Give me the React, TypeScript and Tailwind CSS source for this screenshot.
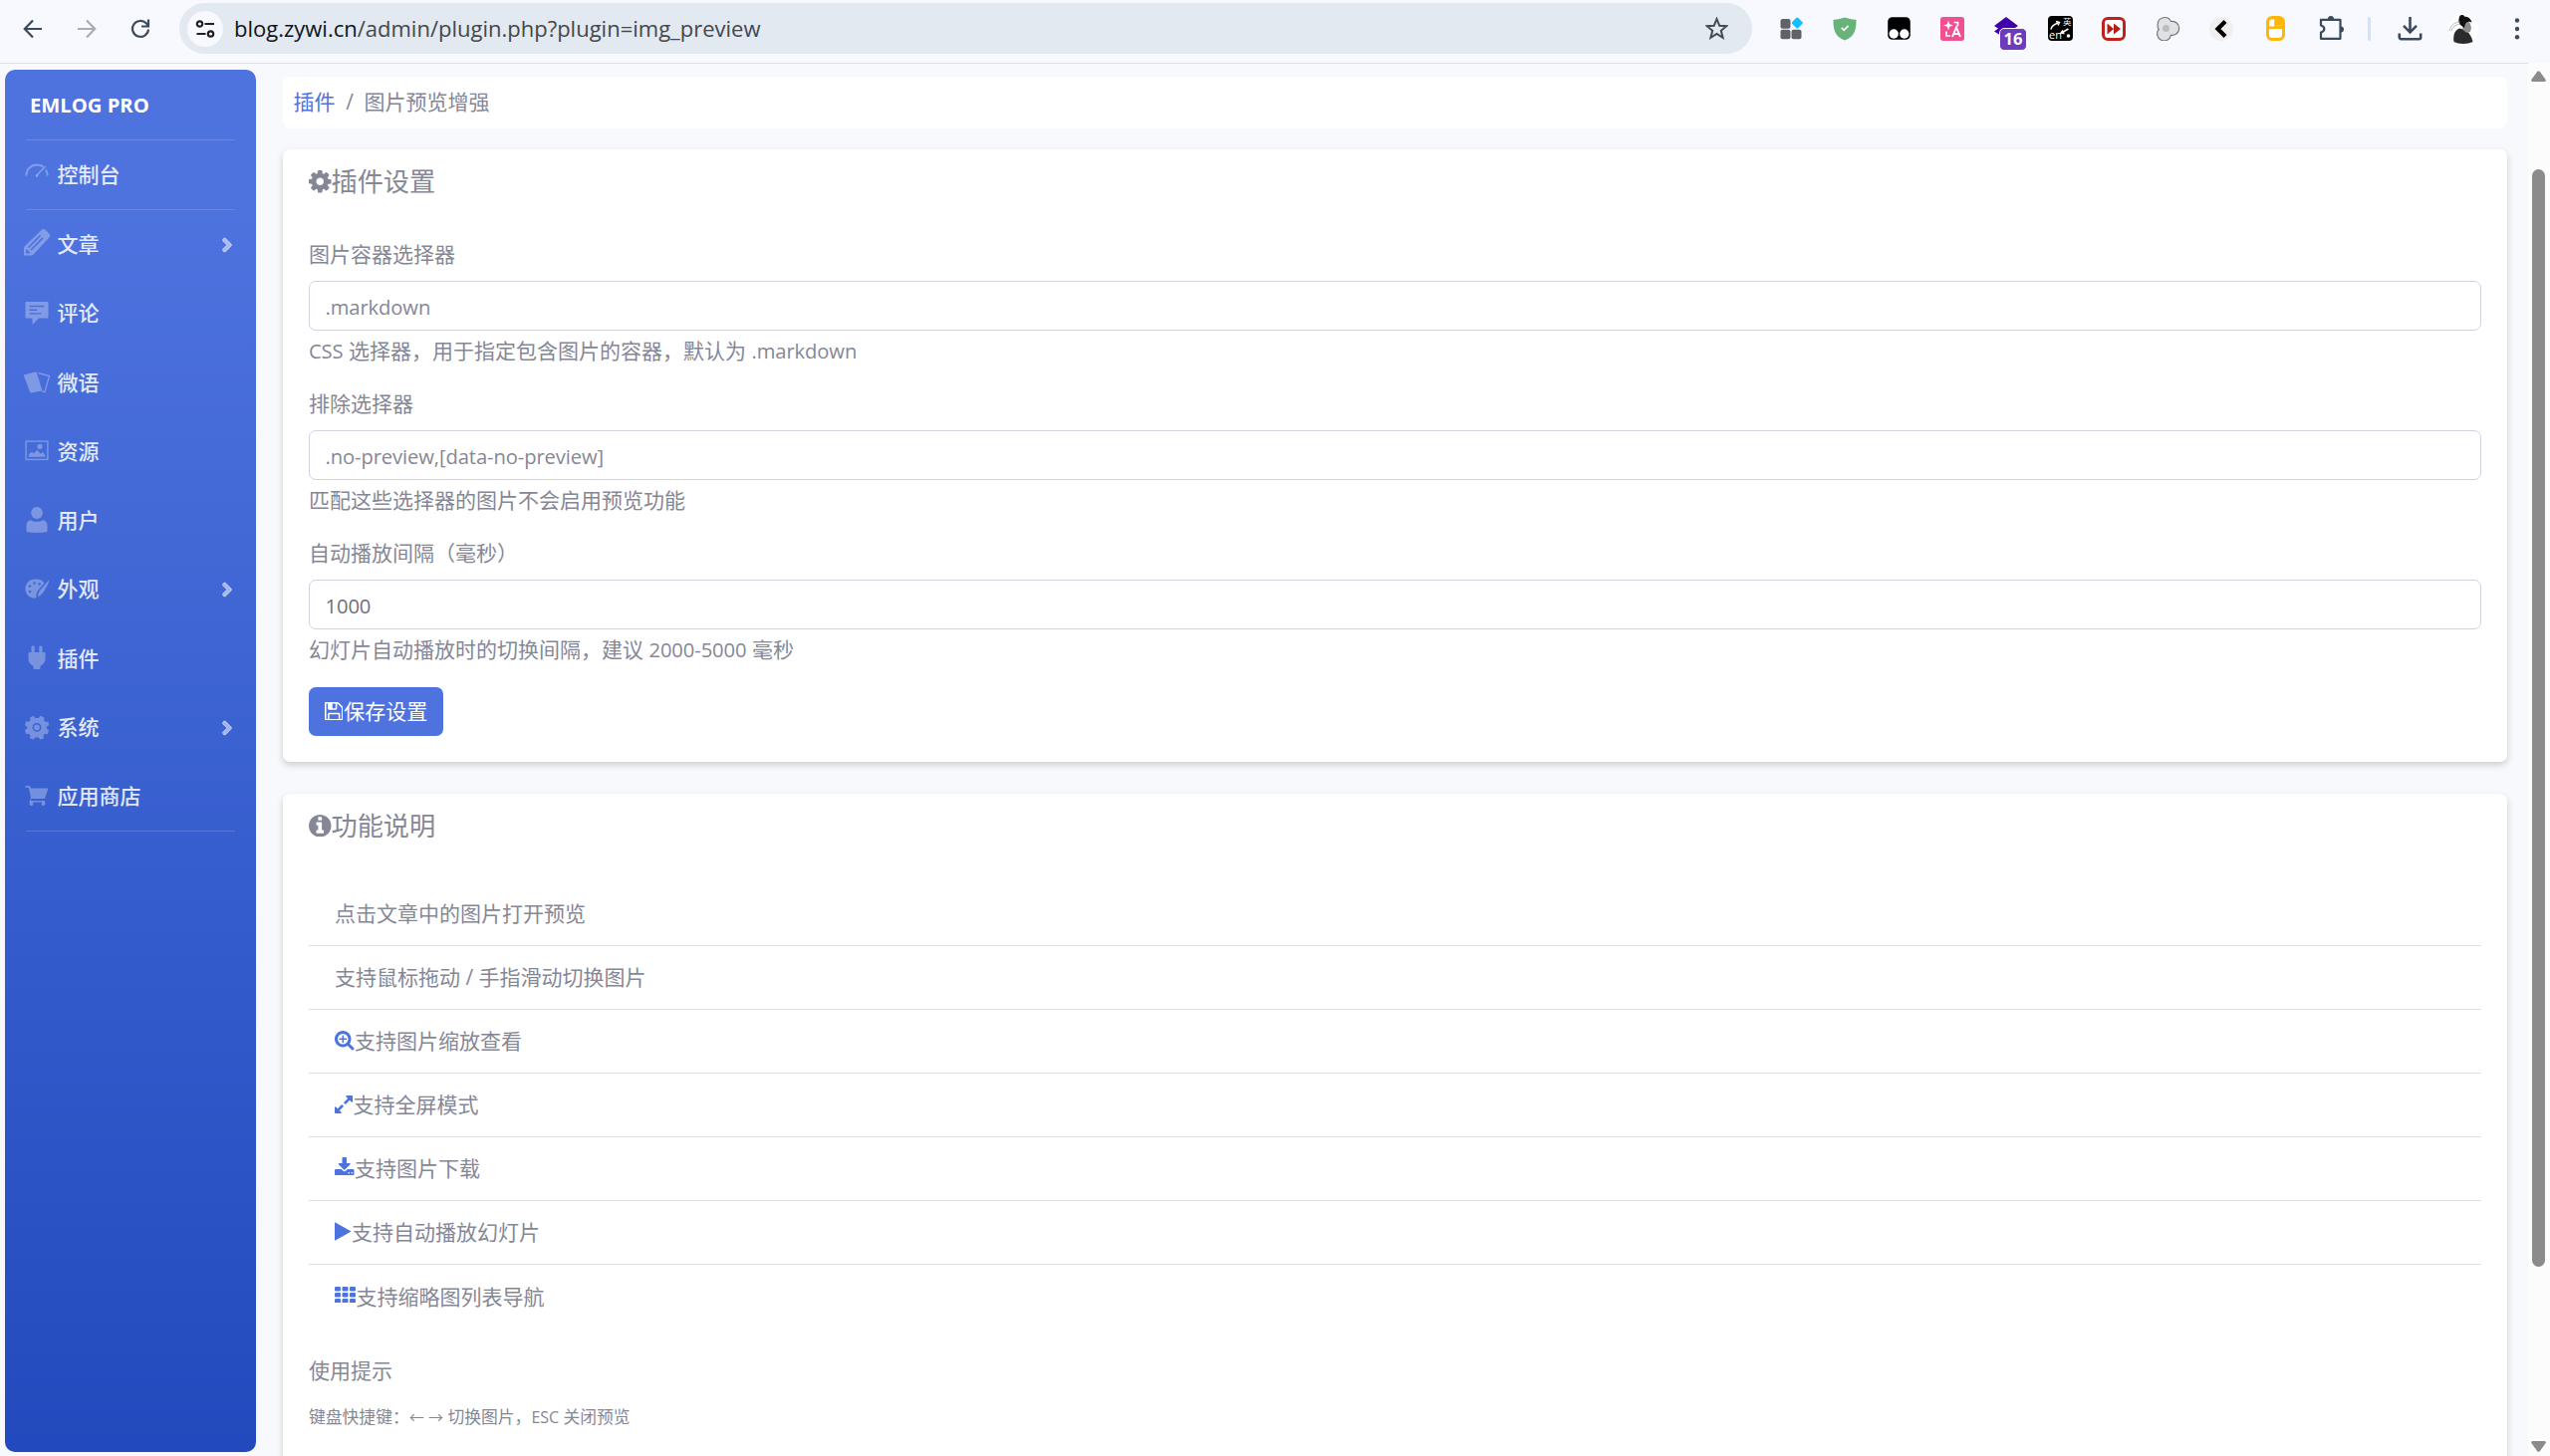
import type { ReactNode } from 'react';
import { FaAngleRight } from 'react-icons/fa';

const COG =
  'M1024 896q0-106-75-181t-181-75-181 75-75 181 75 181 181 75 181-75 75-181zm512-109v222q0 12-8 23t-20 13l-185 28q-19 54-39 91 35 50 107 138 10 12 10 25t-9 23q-27 37-99 108t-94 71q-12 0-26-9l-138-108q-44 23-91 38-16 136-29 186-7 28-36 28h-222q-14 0-24.5-8.5t-11.5-21.5l-28-184q-49-16-90-37l-141 107q-10 9-25 9-14 0-25-11-126-114-165-168-7-10-7-23 0-12 8-23 15-21 51-66.5t54-70.5q-27-50-41-99l-183-27q-13-2-21-12.5t-8-23.5v-222q0-12 8-23t19-13l186-28q14-46 39-92-40-57-107-138-10-12-10-24 0-10 9-23 26-36 98.5-107.5t94.5-71.5q13 0 26 10l138 107q44-23 91-38 16-136 29-186 7-28 36-28h222q14 0 24.5 8.5t11.5 21.5l28 184q49 16 90 37l142-107q9-9 24-9 13 0 25 10 129 119 165 170 7 8 7 22 0 12-8 23-15 21-51 66.5t-54 70.5q26 50 41 98l183 28q13 2 21 12.5t8 23.5z';
const INFO =
  'M1152 1376v-160q0-14-9-23t-23-9h-96v-512q0-14-9-23t-23-9h-320q-14 0-23 9t-9 23v160q0 14 9 23t23 9h96v320h-96q-14 0-23 9t-9 23v160q0 14 9 23t23 9h448q14 0 23-9t9-23zm-128-896v-160q0-14-9-23t-23-9h-192q-14 0-23 9t-9 23v160q0 14 9 23t23 9h192q14 0 23-9t9-23zm640 416q0 209-103 385.5t-279.5 279.5-385.5 103-385.5-103-279.5-279.5-103-385.5 103-385.5 279.5-279.5 385.5-103 385.5 103 279.5 279.5 103 385.5z';
const SEARCH_PLUS =
  'M1088 800v64q0 13-9.5 22.5t-22.5 9.5h-224v224q0 13-9.5 22.5t-22.5 9.5h-64q-13 0-22.5-9.5t-9.5-22.5v-224h-224q-13 0-22.5-9.5t-9.5-22.5v-64q0-13 9.5-22.5t22.5-9.5h224v-224q0-13 9.5-22.5t22.5-9.5h64q13 0 22.5 9.5t9.5 22.5v224h224q13 0 22.5 9.5t9.5 22.5zm128 32q0-185-131.5-316.5t-316.5-131.5-316.5 131.5-131.5 316.5 131.5 316.5 316.5 131.5 316.5-131.5 131.5-316.5zm512 832q0 53-37.5 90.5t-90.5 37.5q-54 0-90-38l-343-342q-179 124-399 124-143 0-273.5-55.5t-225-150-150-225-55.5-273.5 55.5-273.5 150-225 225-150 273.5-55.5 273.5 55.5 225 150 150 225 55.5 273.5q0 220-124 399l343 343q37 37 37 90z';
const EXPAND =
  'M883 1056q0 13-10 23l-332 332 144 144q19 19 19 45t-19 45-45 19h-448q-26 0-45-19t-19-45v-448q0-26 19-45t45-19 45 19l144 144 332-332q10-10 23-10t23 10l114 114q10 10 10 23zm781-864v448q0 26-19 45t-45 19-45-19l-144-144-332 332q-10 10-23 10t-23-10l-114-114q-10-10-10-23t10-23l332-332-144-144q-19-19-19-45t19-45 45-19h448q26 0 45 19t19 45z';
const DOWNLOAD =
  'M1344 1344q0-26-19-45t-45-19-45 19-19 45 19 45 45 19 45-19 19-45zm256 0q0-26-19-45t-45-19-45 19-19 45 19 45 45 19 45-19 19-45zm128-224v320q0 40-28 68t-68 28h-1472q-40 0-68-28t-28-68v-320q0-40 28-68t68-28h465l135 136q58 56 136 56t136-56l136-136h464q40 0 68 28t28 68zm-325-569q17 41-14 70l-448 448q-18 19-45 19t-45-19l-448-448q-31-29-14-70 17-39 59-39h256v-448q0-26 19-45t45-19h256q26 0 45 19t19 45v448h256q42 0 59 39z';
const PLAY =
  'M1576 927l-1328 738q-23 13-39.5 3t-16.5-36v-1472q0-26 16.5-36t39.5 3l1328 738q23 13 23 31t-23 31z';
const FLOPPY =
  'M512 1536h768v-384h-768v384zm896 0h128v-896q0-14-10-38.5t-20-34.5l-281-281q-10-10-34-20t-39-10v416q0 40-28 68t-68 28h-576q-40 0-68-28t-28-68v-416h-128v1280h128v-416q0-40 28-68t68-28h832q40 0 68 28t28 68v416zm-384-928v-320q0-13-9.5-22.5t-22.5-9.5h-192q-13 0-22.5 9.5t-9.5 22.5v320q0 13 9.5 22.5t22.5 9.5h192q13 0 22.5-9.5t9.5-22.5zm640 32v928q0 40-28 68t-68 28h-1344q-40 0-68-28t-28-68v-1344q0-40 28-68t68-28h928q40 0 88 20t76 48l280 280q28 28 48 76t20 88z';

function Glyph({ d, box, className }: { d: string; box: string; className: string }) {
  return (
    <svg viewBox={box} className={`shrink-0 ${className}`} fill="currentColor">
      <path d={d} />
    </svg>
  );
}

/* Latin runs are set a little smaller than the Chinese text around them. */
function En({ children }: { children: ReactNode }) {
  return <span className="text-[20.2px] tracking-[-0.1px]">{children}</span>;
}

function ToolSlot({ children }: { children: ReactNode }) {
  return <div className="flex w-[54px] shrink-0 items-center justify-center">{children}</div>;
}

function BrowserBar() {
  return (
    <header className="flex h-[64px] shrink-0 items-start border-b border-[#dcdfe6] bg-[#f8f9fe]">
      <div className="flex h-[57px] w-full items-center">
        <div className="flex w-[180px] items-center pl-[6px] text-[#3c4a5c]">
          <ToolSlot>
            <svg className="h-[20px] w-[20px]" viewBox="0 0 20 20" fill="none" stroke="currentColor" strokeWidth="2.2">
              <path d="M19 10H2M10 1.5L1.8 10l8.200 8.500" />
            </svg>
          </ToolSlot>
          <ToolSlot>
            <svg className="h-[20px] w-[20px] text-[#a9acb2]" viewBox="0 0 20 20" fill="none" stroke="currentColor" strokeWidth="2.2">
              <path d="M1 10h17M10 1.500l8.200 8.500-8.200 8.500" />
            </svg>
          </ToolSlot>
          <ToolSlot>
            <svg className="h-[20px] w-[20px]" viewBox="0 0 20 20" fill="none" stroke="currentColor" strokeWidth="2.200">
              <path d="M18 10.500A8 8 0 1 1 15.700 4.300L18 6.600M18 0.500v7h-7" />
            </svg>
          </ToolSlot>
        </div>
        <div className="flex h-[51px] w-[1579px] items-center rounded-full bg-[#e2e9f1] pl-[8px] pr-[24px]">
          <div className="flex h-[36px] w-[36px] items-center justify-center rounded-full bg-[#f8f9fe]">
            <svg className="h-[18px] w-[20px]" viewBox="0 0 20 18" fill="none" stroke="#202124" strokeWidth="2.200">
              <circle cx="4.500" cy="4" r="2.700" />
              <path d="M9.500 4H19M1.500 14h9" />
              <circle cx="15.500" cy="14" r="2.700" />
            </svg>
          </div>
          <p className="-mt-[2px] ml-[11px] flex-1 text-[22px] leading-[30px] text-[#44474c]">
            <span className="text-[#111317]">blog.zywi.cn</span>/admin/plugin.php?plugin=img_preview
          </p>
          <svg className="h-[23px] w-[23px]" viewBox="0 0 23 23" fill="none" stroke="#444a52" strokeWidth="2">
            <path d="M11.500 2l2.700 6.700 7.100.500-5.500 4.600 1.800 7-6.100-3.900-6.100 3.900 1.800-7L1.700 9.200l7.100-.500z" />
          </svg>
        </div>
        <div className="ml-[12px] flex items-center">
          <ToolSlot>
            <svg className="h-[23px] w-[23px]" viewBox="0 0 23 23">
              <rect x="0.500" y="2" width="10" height="9.700" rx="2" fill="#5f6368" />
              <rect x="0.500" y="12.800" width="10" height="9.500" rx="2" fill="#5f6368" />
              <rect x="11.500" y="12.800" width="10" height="9.500" rx="2" fill="#5f6368" />
              <rect x="13" y="1.700" width="8.600" height="8.600" rx="1.500" fill="#12bfff" transform="rotate(45 17.300 6)" />
            </svg>
          </ToolSlot>
          <ToolSlot>
            <svg className="h-[24px] w-[24px]" viewBox="0 0 24 24">
              <path d="M12 0.500c3.500 1.300 7 2 11.500 2.200C23.700 13 21.500 20 12 23.500 2.500 20 .3 13 .5 2.700 5 2.500 8.500 1.800 12 .5z" fill="#68b377" />
              <path d="M8.800 10.800l2.500 2.500 4.200-4.400" fill="none" stroke="#fff" strokeWidth="1.800" />
            </svg>
          </ToolSlot>
          <ToolSlot>
            <svg className="h-[23px] w-[23px]" viewBox="0 0 23 23">
              <rect x="0.200" y="0.200" width="22.600" height="22.600" rx="4.500" fill="#000" />
              <circle cx="6.200" cy="17" r="4.700" fill="#fff" />
              <circle cx="16.800" cy="17" r="4.700" fill="#fff" />
            </svg>
          </ToolSlot>
          <ToolSlot>
            <svg className="h-[24px] w-[24px]" viewBox="0 0 24 24" fill="none" stroke="#fff">
              <rect width="24" height="24" rx="3" fill="#f14f92" stroke="none" />
              <path d="M8 3.500l1.200 3.800L13 8.500l-3.800 1.200L8 13.500 6.800 9.700 3 8.500l3.800-1.200z" fill="#fff" stroke="none" />
              <path d="M13.500 5.500h4v4M6 14.500v4.500h4" strokeWidth="1.700" />
              <path d="M12 20l4-9.500 4 9.500M13.300 17h5.400" strokeWidth="1.900" />
            </svg>
          </ToolSlot>
          <ToolSlot>
            <div className="relative h-[24px] w-[24px]">
              <svg className="h-[24px] w-[24px]" viewBox="0 0 24 24">
                <path d="M12 0l12 9-12 8L0 9z" fill="#4200ad" />
                <path d="M0 14.500l5-3.500 7 5v6z" fill="#4200ad" />
              </svg>
              <span className="absolute left-[5px] top-[11px] flex h-[23px] w-[28px] items-center justify-center rounded-[5px] border border-[#f8f9fe] bg-[#6c3cbd] text-[16.5px] font-bold leading-none text-white">
                16
              </span>
            </div>
          </ToolSlot>
          <ToolSlot>
            <div className="relative h-[25px] w-[25px] rounded-[4px] bg-black text-white">
              <svg className="h-[25px] w-[25px]" viewBox="0 0 25 25" fill="none" stroke="#fff" strokeWidth="1.500">
                <path d="M3 13.500c.500-3.500 3-5 7-6.500M8 5.500l3.500 1-1.500 3M13.500 17l7-4M15 14.500l-2 2.700 3.500.300" />
                <circle cx="20.500" cy="20" r="1.800" fill="#fff" stroke="none" />
              </svg>
              <span className="absolute bottom-[1px] left-[1.500px] text-[11px] leading-[10px]">en</span>
              <span className="absolute right-[1px] top-[1px] text-[8.500px] leading-[9px]">英</span>
            </div>
          </ToolSlot>
          <ToolSlot>
            <svg className="h-[24px] w-[24px]" viewBox="0 0 24 24">
              <rect x="1.500" y="1.500" width="21" height="21" rx="4.500" fill="#fff" stroke="#bf221d" strokeWidth="3" />
              <path d="M5.500 6.500l6.500 5.500-6.500 5.500zM12 6.500l7 5.500-7 5.500z" fill="#b41c18" />
            </svg>
          </ToolSlot>
          <ToolSlot>
            <svg className="h-[25px] w-[25px]" viewBox="0 0 25 25">
              <path
                d="M2.200 8.500A7 7 0 0 1 15.500 5.500 7 7 0 1 1 15.500 19.300 7 7 0 1 1 3.200 13.500 7 7 0 0 1 2.200 8.500z"
                fill="#e0e1e3"
                stroke="#75777b"
                strokeWidth="1.200"
              />
              <circle cx="10.500" cy="12.500" r="3.500" fill="#bcbdbf" />
            </svg>
          </ToolSlot>
          <ToolSlot>
            <svg className="h-[24px] w-[24px]" viewBox="0 0 24 24">
              <circle cx="12" cy="12" r="12" fill="#f0efee" />
              <path d="M16 4.500L8.500 12l7.500 7.500" fill="none" stroke="#000" strokeWidth="4.200" />
            </svg>
          </ToolSlot>
          <ToolSlot>
            <svg className="h-[25px] w-[19px]" viewBox="0 0 19 25">
              <rect x="1.500" y="1.500" width="16" height="22" rx="4.500" fill="#fff" stroke="#ffb60a" strokeWidth="3" />
              <path d="M2 13V3h8v6.500h7V13z" fill="#ffb60a" />
              <path d="M10 2.500h4.500a2.500 2.500 0 0 1 2 2.500v4.500H10z" fill="#ffb60a" />
              <path d="M3.300 10.500V6a2.700 2.700 0 0 1 2.700-2.700h2.200v7.200z" fill="#fff" />
            </svg>
          </ToolSlot>
          <div className="flex w-[58px] items-center justify-center">
            <svg className="h-[25px] w-[25px]" viewBox="0 0 25 25" fill="none" stroke="#3c4a5c" strokeWidth="2.200" strokeLinejoin="round">
              <path d="M2 3.800h19.500v19H2v-6.300c4.500-1.500 4.500-5.500 0-7z" />
              <path d="M9 3a3 3 0 0 1 6 0zM22 10.500a3 3 0 0 1 0 6z" fill="#3c4a5c" stroke="none" />
            </svg>
          </div>
          <div className="ml-[8px] h-[24px] w-[3px] rounded-full bg-[#cfe3fc]" />
          <div className="ml-[12px] flex">
            <ToolSlot>
              <svg className="h-[25px] w-[25px]" viewBox="0 0 25 25" fill="none" stroke="#3c4a5c" strokeWidth="2.600">
                <path d="M12.500 1v15M6 9.800l6.500 6.500L19 9.800M1.800 17.500v4a1.700 1.700 0 0 0 1.700 1.700h18a1.700 1.700 0 0 0 1.700-1.700v-4" />
              </svg>
            </ToolSlot>
            <ToolSlot>
              <svg className="h-[30px] w-[30px]" viewBox="0 0 30 30">
                <circle cx="15" cy="15" r="15" fill="#fff" />
                <path d="M5.500 28c-1-6 .5-12 6-13.500l5 1.500c4 2 7 7 8 12-5 2.500-14 2.700-19 0z" fill="#2b2b2b" />
                <path d="M14 8c3-1.500 7-.5 8 2l1 4-1 4-4 .8-3.500-3z" fill="#8c8c8c" />
                <path d="M11 3c1-2.500 4-2.500 5-.5 4 .3 7 2.500 7.500 6-3-1.500-5-.5-6.500 1.500l-1 4-4-3c-2-2-2-5-1-8z" fill="#111" />
                <path d="M12 8C6 8 2 12 1 17M12 10c-5 1-8 3-9 7" stroke="#999" strokeWidth="0.700" fill="none" />
              </svg>
            </ToolSlot>
            <ToolSlot>
              <svg className="h-[22px] w-[6px]" viewBox="0 0 6 22" fill="#3c4a5c">
                <circle cx="3" cy="2.500" r="2.200" />
                <circle cx="3" cy="11" r="2.200" />
                <circle cx="3" cy="19.300" r="2.200" />
              </svg>
            </ToolSlot>
          </div>
        </div>
      </div>
    </header>
  );
}

const navIcons: Record<string, ReactNode> = {
  dashboard: (
    <g fill="none" stroke="currentColor" strokeWidth="1.900">
      <path d="M1.300 14.500C1.300 8 6 3.500 12 3.500c2.500 0 4.600.7 6.300 1.900M21 8.500c1.100 1.700 1.700 3.700 1.700 6" />
      <path d="M20.500 5L11.500 14.500" strokeWidth="1.600" />
      <circle cx="12" cy="14.500" r="1.300" fill="currentColor" stroke="none" />
    </g>
  ),
  pencil: (
    <path
      fillRule="evenodd"
      d="M17-1.200c1-1 2.500-1 3.500 0l4 4c1 1 1 2.500 0 3.500L8.500 23.500c-.8.8-1.500 1-2.500 1h-7v-7c0-1 .3-1.800 1-2.500zM15 3.800L3 15.900l1.100 1.100L16 5zM17.500 6.300L5.500 18.500l1.200 1.100L18.600 7.500zM1.200 17.800l-.2 4.700 4.700-.2z"
    />
  ),
  comment: (
    <path
      fillRule="evenodd"
      d="M1.500 1h21c.8 0 1 .3 1 1v14.500c0 .8-.3 1-1 1H14L7.500 24v-6.500h-6c-.7 0-1-.3-1-1V2c0-.7.300-1 1-1zM4.500 4.800v1.400h15V4.800zM4.500 8.500v1.400h7.800V8.500zM4.500 12.200v1.400h11.800v-1.400z"
    />
  ),
  cards: (
    <g>
      <path d="M-.5 5.200L10.500 2.500c.7-.2 1.200 0 1.400.7L17 20c.2.800 0 1.300-.8 1.500L6.500 23.500c-.7.100-1.200-.1-1.400-.8L-1 6.500c-.2-.7 0-1.100.5-1.300z" />
      <path d="M13.500 3.500l11 3-4.500 16-3.500-.7" fill="none" stroke="currentColor" strokeWidth="1.300" />
    </g>
  ),
  image: (
    <g>
      <rect x="1.100" y="3.100" width="21.800" height="18.300" fill="none" stroke="currentColor" strokeWidth="1.400" />
      <circle cx="15" cy="8.300" r="2.600" />
      <path d="M3.500 18.800c.3-2.300 1.500-3.800 3.500-5.300l2 2 3.200-3.500 3.600 3.700 2-1.700c1.500 1.300 2.500 2.800 2.800 4.800z" />
    </g>
  ),
  user: (
    <g>
      <ellipse cx="12" cy="5" rx="5.800" ry="6" />
      <path d="M5.500 12.200c4 2.200 9 2.200 13 0 2.700 1 4 2.500 4 5.500v5c0 1-.7 1.500-1.500 1.600-6 .9-12 .9-18 0-.9-.1-1.500-.6-1.500-1.600v-5c0-3 1.300-4.500 4-5.500z" />
    </g>
  ),
  palette: (
    <g>
      <path
        fillRule="evenodd"
        d="M10 2.500c5 0 8.500 1.500 9.500 4L13 14c-1.500 2-1.500 4-1.500 7-1 .8-2.500.7-3.500.5C3.500 20.500.5 17 .5 12.500.5 6.500 4.500 2.500 10 2.500zM9.500 5.200a1.300 1.300 0 1 0 0 2.600 1.300 1.300 0 0 0 0-2.600zM14.500 6.200a1.300 1.300 0 1 0 0 2.600 1.300 1.300 0 0 0 0-2.600zM5 8.200a1.300 1.300 0 1 0 0 2.600 1.300 1.300 0 0 0 0-2.600zM5 13.700a1.300 1.300 0 1 0 0 2.600 1.300 1.300 0 0 0 0-2.600z"
      />
      <path d="M24 3.500c.3 2-1 4.500-3 8-2 4-4 6.500-7.500 9-.5-2.500 0-4.500 1.500-6.500z" />
    </g>
  ),
  plug: (
    <path d="M6.500 1.500C6.500.2 9.700.2 9.700 1.500V7h4.600V1.500c0-1.300 3.200-1.300 3.200 0V7h1.700c.8 0 1.300.5 1.300 1.300v5c0 3.500-1.500 5.500-4.500 7.200l-.5.500v2c0 .6-.3 1-1 1h-5c-.7 0-1-.4-1-1v-2l-.5-.5c-3-1.700-4.500-3.700-4.500-7.200v-5C3.500 7.500 4 7 4.800 7h1.700z" />
  ),
  gear: (
    <path
      fillRule="evenodd"
      d="M8.500.800l1.700 2.200h3.600L15.500.800l4 1.700-.5 2.800 1.700 1.700 2.800-.5.500 3.800-2.300 1.700v1.600l2.300 1.700-1.200 4-2.800-.5-1.500 1.500.5 2.900-3.500 1.500-1.700-2.300h-3.600l-1.700 2.300-3.500-1.500.5-2.900-1.500-1.500-2.800.5-1.200-4L2.300 13.600V12L0 10.300l1-4 2.800.5L5.500 5.300 5 2.500zM12 8a4.400 4.400 0 1 0 0 8.800A4.400 4.400 0 0 0 12 8zM12 9.500a2.900 2.900 0 1 1 0 5.800 2.900 2.900 0 0 1 0-5.800z"
    />
  ),
  cart: (
    <g>
      <path d="M.5 2h4.300L6 4.500h17.500L20 15H6.500l-.5 2h14v1.500H4.500L6 14 3.800 3.700H.5z" />
      <circle cx="6.500" cy="20" r="2" />
      <circle cx="18.500" cy="20" r="2" />
    </g>
  ),
};

const nav = [
  { icon: 'pencil', label: '文章', more: true },
  { icon: 'comment', label: '评论' },
  { icon: 'cards', label: '微语' },
  { icon: 'image', label: '资源' },
  { icon: 'user', label: '用户' },
  { icon: 'palette', label: '外观', more: true },
  { icon: 'plug', label: '插件' },
  { icon: 'gear', label: '系统', more: true },
  { icon: 'cart', label: '应用商店' },
];

function NavItem({ icon, label, more }: { icon: string; label: string; more?: boolean }) {
  return (
    <a className="flex h-[69.3px] items-center pl-[20px] pr-[22px]">
      <svg viewBox="0 0 24 24" className="-mt-[3px] h-[24px] w-[24px] overflow-visible text-white/30" fill="currentColor">
        {navIcons[icon]}
      </svg>
      <span className="-mt-[2px] ml-[8.5px] flex-1 text-[21px] font-medium leading-[30px] text-white/85">{label}</span>
      {more && <FaAngleRight className="h-[22px] w-[14px] stroke-current text-white/50" strokeWidth="24" />}
    </a>
  );
}

function Sidebar() {
  return (
    <aside className="ml-[5px] mt-[6px] flex h-[1387.5px] w-[252px] shrink-0 flex-col rounded-[10px] bg-linear-to-b from-[#4e73df] from-10% to-[#224abe]">
      <div className="flex h-[70px] items-center pl-[25px] text-[20.2px] font-bold leading-none text-white">EMLOG PRO</div>
      <hr className="mx-[21px] border-white/15" />
      <NavItem icon="dashboard" label="控制台" />
      <hr className="mx-[21px] border-white/15" />
      {nav.map((n) => (
        <NavItem key={n.label} {...n} />
      ))}
      <hr className="mx-[21px] -mt-px border-white/15" />
    </aside>
  );
}

function Field({ label, value, help, dark }: { label: string; value: string; help: ReactNode; dark?: boolean }) {
  return (
    <div className="h-[150px]">
      <label className="block h-[42px] leading-[31px]">{label}</label>
      <div className={`flex h-[50px] items-center rounded-[7px] border border-[#d1d3e2] bg-white px-[15.5px] pt-[2px] ${dark ? 'text-[#6e707e]' : ''}`}>
        <En>{value}</En>
      </div>
      <p className="mt-[5px] leading-[31px]">{help}</p>
    </div>
  );
}

const features: { icon?: ReactNode; text: ReactNode }[] = [
  { text: '点击文章中的图片打开预览' },
  { text: '支持鼠标拖动 / 手指滑动切换图片' },
  { icon: <Glyph d={SEARCH_PLUS} box="64 128 1664 1664" className="h-[19.5px] w-[19.5px]" />, text: '支持图片缩放查看' },
  { icon: <Glyph d={EXPAND} box="128 128 1536 1536" className="h-[18px] w-[18px]" />, text: '支持全屏模式' },
  { icon: <Glyph d={DOWNLOAD} box="64 0 1664 1664" className="-mt-[3px] h-[19.5px] w-[19.5px]" />, text: '支持图片下载' },
  { icon: <Glyph d={PLAY} box="192 0 1408 1792" className="-mt-px h-[21px] w-[16.5px]" />, text: '支持自动播放幻灯片' },
  {
    icon: (
      <svg viewBox="0 0 1792 1408" className="-mt-[3px] h-[16.5px] w-[21px]" fill="currentColor">
        {[0, 512, 1024].map((y) =>
          [0, 640, 1280].map((x) => <rect key={`${x}-${y}`} x={x} y={y} width="512" height="384" rx="96" />),
        )}
      </svg>
    ),
    text: '支持缩略图列表导航',
  },
];

export default function App() {
  return (
    <div className="flex h-[1462px] w-[2560px] flex-col overflow-hidden bg-[#f8f9fc] font-['Open_Sans','Noto_Sans_CJK_SC',sans-serif] text-[21px] text-[#858796]">
      <BrowserBar />
      <div className="flex min-h-0 flex-1">
        <Sidebar />
        <main className="ml-[27px] mr-[20.5px] flex w-[2233px] shrink-0 flex-col pt-[13px]">
          <nav className="flex h-[52px] shrink-0 items-center rounded-[7px] bg-white pb-[2px] pl-[10.5px] leading-[32px]">
            <a className="text-[#4e73df]">插件</a>
            <span className="w-[29px] text-center">/</span>
            <span>图片预览增强</span>
          </nav>
          <section className="mt-[21px] h-[615px] shrink-0 rounded-[7px] bg-white px-[26px] shadow-[0_3px_7px_rgba(0,0,0,0.18)]">
            <h2 className="flex h-[65px] items-center text-[26.200px] leading-none">
              <Glyph d={COG} box="0 128 1536 1536" className="h-[22.5px] w-[22.5px]" />
              插件设置
            </h2>
            <div className="pt-[25px]">
              <Field label="图片容器选择器" value=".markdown" help={<><En>CSS</En> 选择器，用于指定包含图片的容器，默认为 <En>.markdown</En></>} />
              <Field label="排除选择器" value=".no-preview,[data-no-preview]" help="匹配这些选择器的图片不会启用预览功能" />
              <Field label="自动播放间隔（毫秒）" value="1000" dark help={<>幻灯片自动播放时的切换间隔，建议 <En>2000-5000</En> 毫秒</>} />
            </div>
            <button className="flex h-[49px] w-[135px] items-center justify-center rounded-[7px] bg-[#4e73df] pb-px text-[21px] leading-[30px] text-white">
              <Glyph d={FLOPPY} box="128 128 1536 1536" className="mr-px h-[18.5px] w-[18.5px]" />
              保存设置
            </button>
          </section>
          <section className="mt-[32px] h-[760px] shrink-0 rounded-[7px] bg-white px-[26px] shadow-[0_3px_7px_rgba(0,0,0,0.18)]">
            <h2 className="flex h-[64px] items-center text-[26.200px] leading-none">
              <Glyph d={INFO} box="128 128 1536 1536" className="h-[22.5px] w-[22.5px]" />
              功能说明
            </h2>
            <ul className="pt-[25px]">
              {features.map((f, i) => (
                <li key={i} className="flex h-[64px] items-center border-b border-[#dddfe2] pb-px pl-[26px] leading-[32px] last:border-b-0">
                  {f.icon && <span className="mr-[0.5px] flex text-[#4e73df]">{f.icon}</span>}
                  <span>{f.text}</span>
                </li>
              ))}
            </ul>
            <h3 className="mt-[26px] leading-[32px]">使用提示</h3>
            <p className="mt-[18px] text-[16.800px] leading-[26px]">
              键盘快捷键：<span className="text-[15px]">←</span> <span className="text-[15px]">→</span> 切换图片，<span className="text-[16px]">ESC</span> 关闭预览
            </p>
            <p className="mt-[22.5px] text-[16.800px] leading-[26px]">触摸设备：双指缩放图片，滑动切换</p>
          </section>
        </main>
        <div className="-mt-px flex w-[22.5px] shrink-0 flex-col items-center bg-[#fcfcfc] pt-[8px]">
          <svg className="h-[11px] w-[15px]" viewBox="0 0 15 11" fill="#8b8b8b">
            <path d="M6.300.8q1.200-1.200 2.400 0L14.700 9q.6 1.500-1 2H1.300Q-.3 10.500.3 9z" />
          </svg>
          <div className="mt-[87.500px] h-[1102.500px] w-[13px] rounded-full bg-[#8b8b8b]" />
          <svg className="mt-[175px] h-[11px] w-[15px]" viewBox="0 0 15 11" fill="#8b8b8b">
            <path d="M6.300 10.200q1.200 1.200 2.400 0L14.700 2q.6-1.500-1-2H1.300Q-.3.5.3 2z" />
          </svg>
        </div>
      </div>
    </div>
  );
}
